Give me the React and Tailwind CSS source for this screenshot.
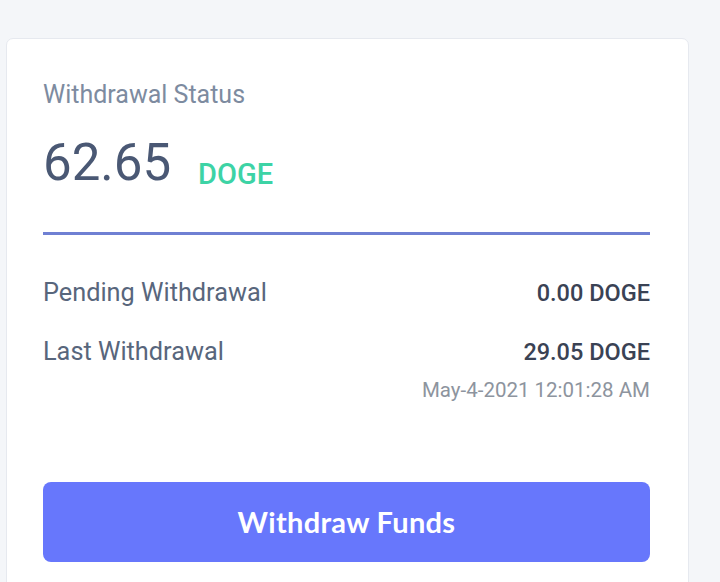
export default function App() {
  return (
    <div className="min-h-[582px] w-[720px] overflow-hidden bg-[#f4f6f9] pt-[38px] pl-[6px] font-['Roboto',sans-serif]">
      <div className="w-[683px] h-[560px] rounded-t-[7px] border border-[#e6e9ef] bg-white pl-[36px] pr-[38px] pt-[40px]">
        <h4 className="text-[25px] leading-[32px] text-[#7d8ba0]">Withdrawal Status</h4>

        {/* balance */}
        <div className="mt-[27px] flex items-baseline">
          <span className="text-[51px] leading-[50px] text-[#4a5874]">62.65</span>
          <span className="ml-[27px] translate-y-[4px] text-[29px] font-medium leading-[28px] text-[#3dd3a5]">DOGE</span>
        </div>

        <div className="mt-[44px] h-[3px] w-full bg-[#6f80d3]" />

        <div className="mt-[44px] flex items-center justify-between">
          <span className="text-[25.3px] leading-[28px] text-[#58667c]">Pending Withdrawal</span>
          <span className="text-[23.5px] font-medium leading-[28px] text-[#3a4254]">0.00 DOGE</span>
        </div>

        <div className="mt-[31px] flex items-center justify-between">
          <span className="text-[25.3px] leading-[28px] text-[#58667c]">Last Withdrawal</span>
          <span className="text-[23.5px] font-medium leading-[28px] text-[#3a4254]">29.05 DOGE</span>
        </div>
        <div className="mt-[12px] text-right text-[20.5px] leading-[24px] text-[#8d949e]">
          May-4-2021 12:01:28 AM
        </div>

        <button className="mt-[80px] flex h-[80px] w-full items-center justify-center rounded-[8px] bg-[#6777fc] font-['Lato',sans-serif] text-[29px] font-bold tracking-[0.3px] text-white">
          Withdraw Funds
        </button>
      </div>
    </div>
  );
}
